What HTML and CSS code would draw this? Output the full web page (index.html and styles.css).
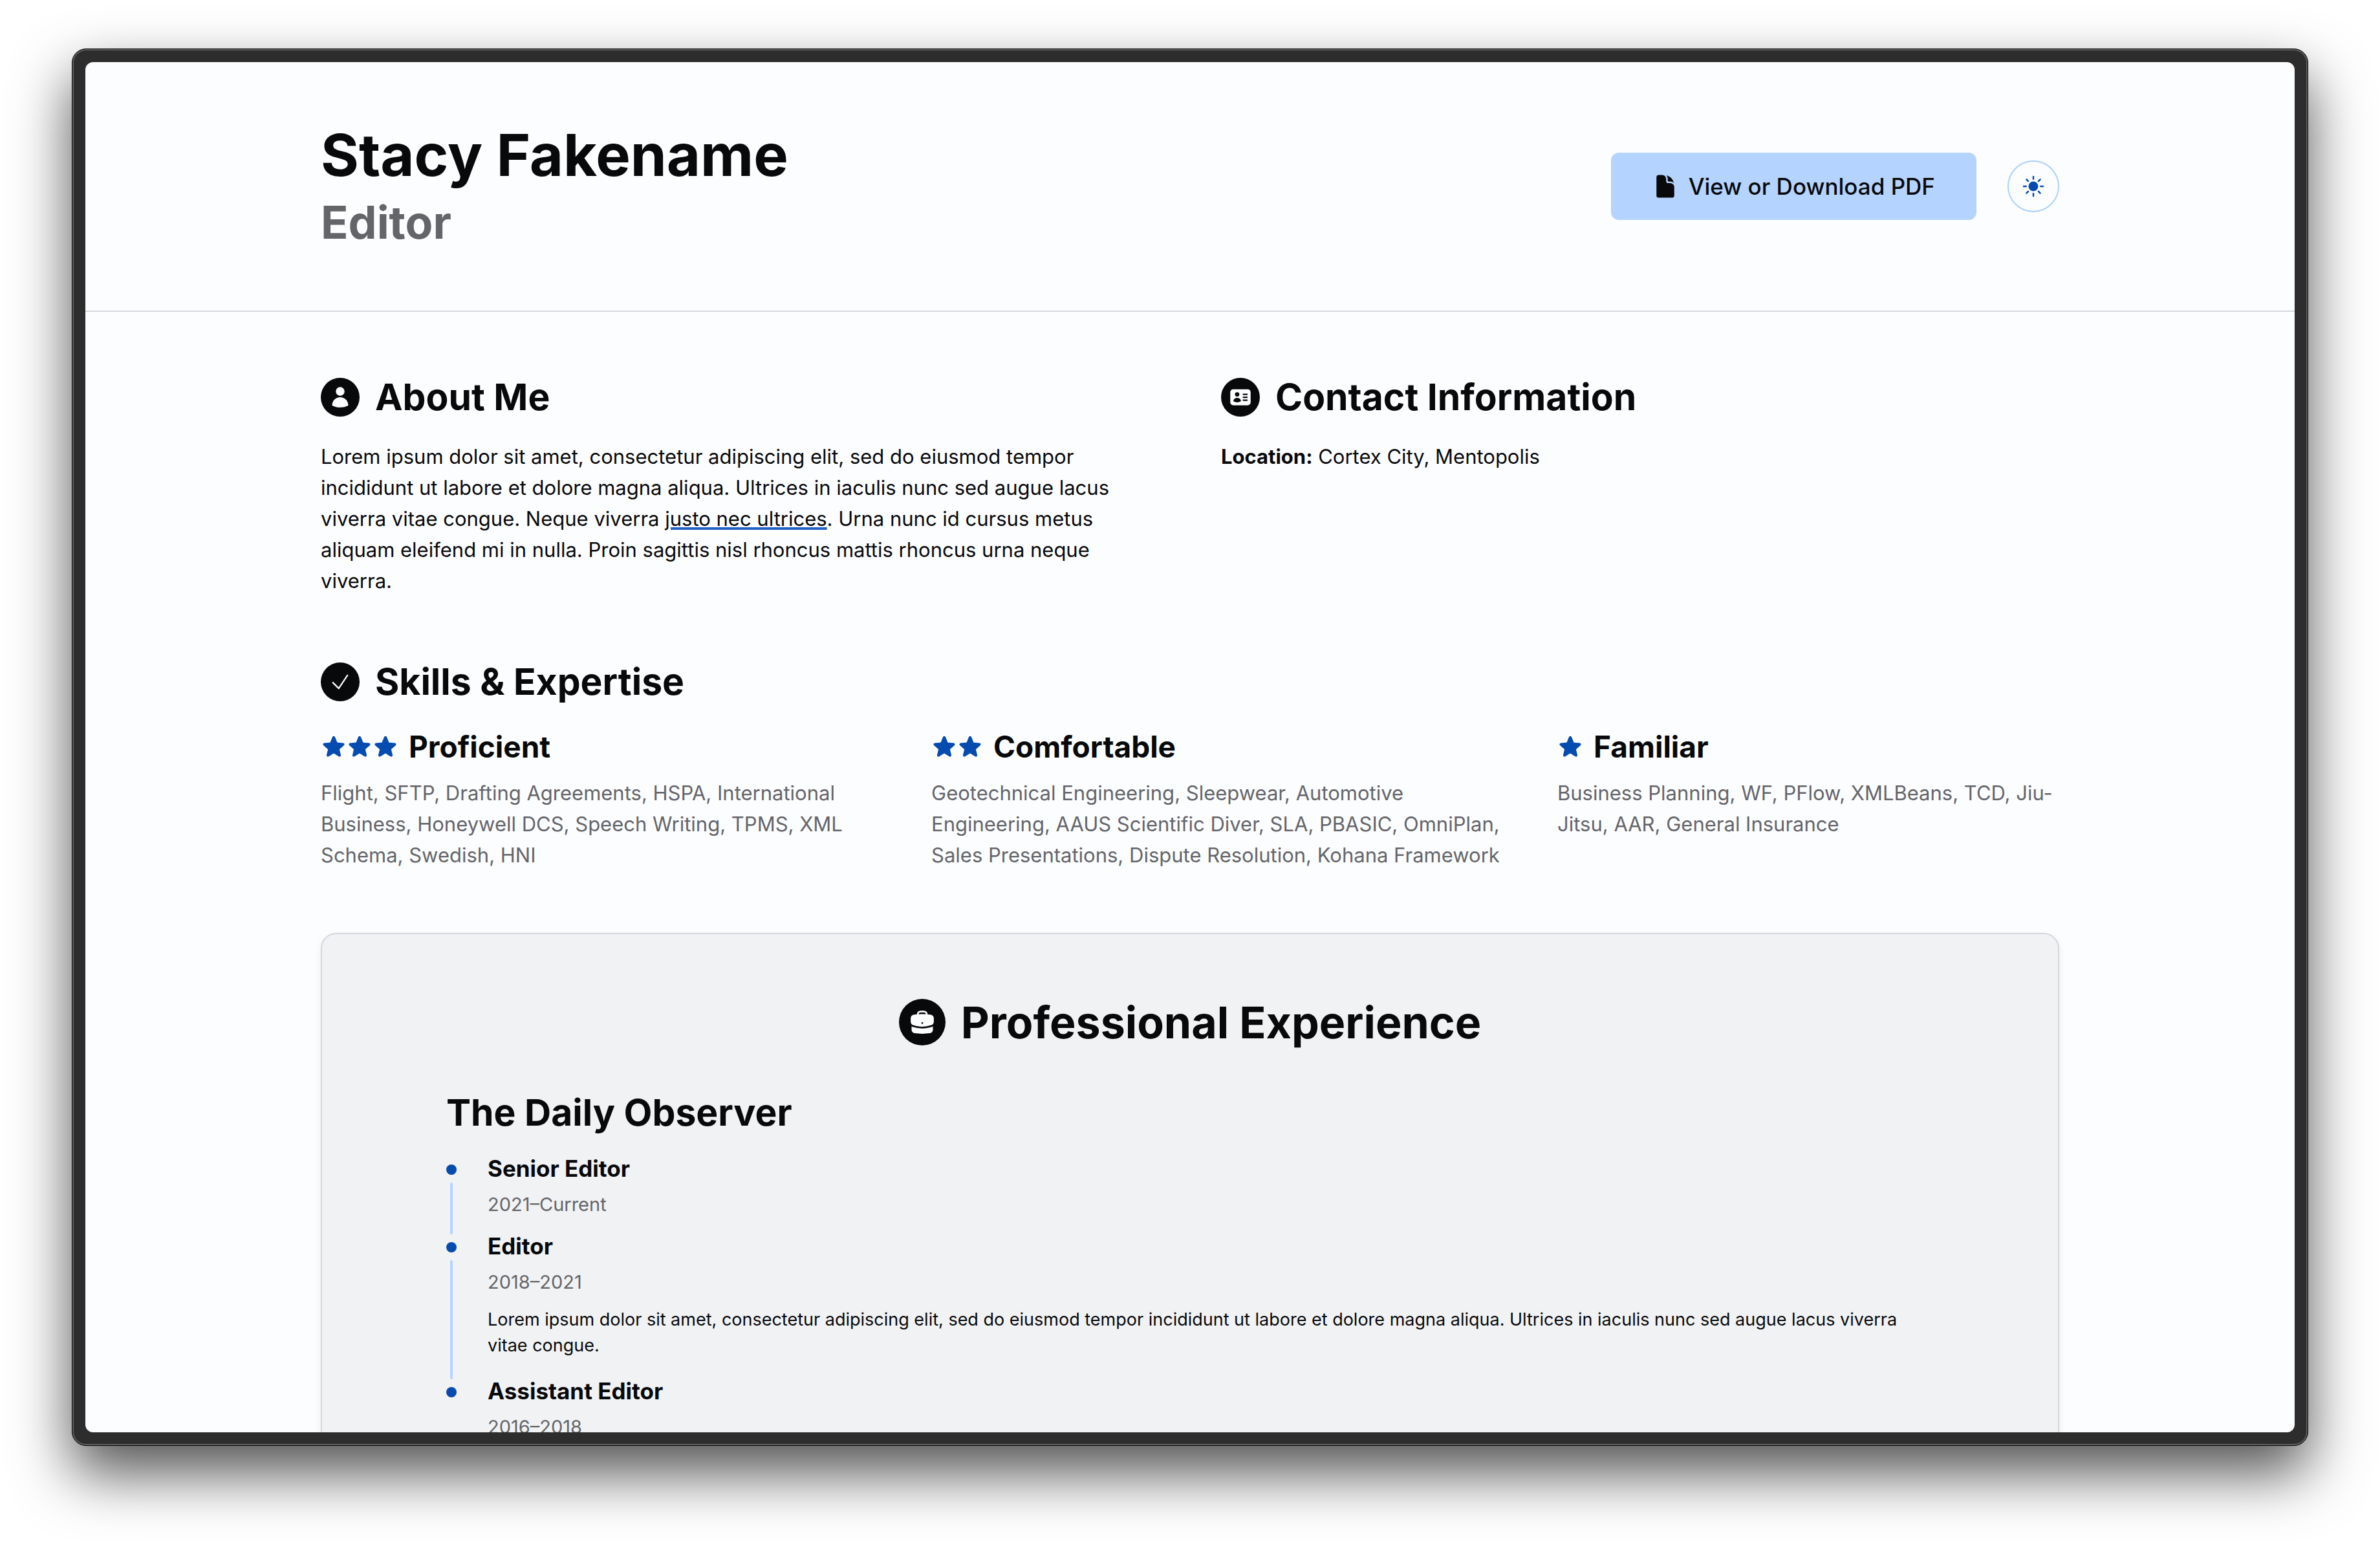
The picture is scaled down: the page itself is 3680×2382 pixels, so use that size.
FILE: index.html
```html
<!DOCTYPE html>
<html lang="en">
<head>
  <meta charset="utf-8">
  <meta name="viewport" content="width=device-width, initial-scale=1">
  <title>Stacy Fakename – Editor</title>
  <link rel="stylesheet" href="styles.css">
</head>
<body>
  <svg class="sprite" aria-hidden="true">
    <symbol id="star" viewBox="0 0 24 24"><path d="M10.788 3.21c.448-1.077 1.976-1.077 2.424 0l2.082 5.006 5.404.434c1.164.093 1.636 1.545.749 2.305l-4.117 3.527 1.257 5.273c.271 1.136-.964 2.033-1.96 1.425L12 18.354 7.373 21.18c-.996.608-2.231-.29-1.96-1.425l1.257-5.273-4.117-3.527c-.887-.76-.415-2.212.749-2.305l5.404-.434 2.082-5.005Z"/></symbol>
  </svg>
  <div class="window">
    <div class="screen">
      <header class="header">
        <div class="container header-row">
          <div>
            <h1 class="name">Stacy Fakename</h1>
            <p class="job-title">Editor</p>
          </div>
          <div class="actions">
            <button class="btn" type="button">
              <svg class="icon-md" viewBox="0 0 24 24" aria-hidden="true"><path d="M5.625 1.5c-1.036 0-1.875.84-1.875 1.875v17.25c0 1.035.84 1.875 1.875 1.875h12.75c1.035 0 1.875-.84 1.875-1.875V12.75A3.75 3.75 0 0 0 16.5 9h-1.875a1.875 1.875 0 0 1-1.875-1.875V5.25A3.75 3.75 0 0 0 9 1.5H5.625Z"/><path d="M12.971 1.816A5.23 5.23 0 0 1 14.25 5.25v1.875c0 .207.168.375.375.375H16.5a5.23 5.23 0 0 1 3.434 1.279 9.768 9.768 0 0 0-6.963-6.963Z"/></svg>
              View or Download PDF
            </button>
            <button class="theme-toggle" type="button" aria-label="Toggle theme">
              <svg class="icon-md" viewBox="0 0 24 24" aria-hidden="true"><path d="M12 2.25a.75.75 0 0 1 .75.75v2.25a.75.75 0 0 1-1.5 0V3a.75.75 0 0 1 .75-.75ZM7.5 12a4.5 4.5 0 1 1 9 0 4.5 4.5 0 0 1-9 0ZM18.894 6.166a.75.75 0 0 0-1.06-1.06l-1.591 1.59a.75.75 0 1 0 1.06 1.061l1.591-1.59ZM21.75 12a.75.75 0 0 1-.75.75h-2.25a.75.75 0 0 1 0-1.5H21a.75.75 0 0 1 .75.75ZM17.834 18.894a.75.75 0 0 0 1.06-1.06l-1.59-1.591a.75.75 0 1 0-1.061 1.06l1.59 1.591ZM12 18a.75.75 0 0 1 .75.75V21a.75.75 0 0 1-1.5 0v-2.25A.75.75 0 0 1 12 18ZM7.758 17.303a.75.75 0 0 0-1.061-1.06l-1.591 1.59a.75.75 0 0 0 1.06 1.061l1.591-1.59ZM6 12a.75.75 0 0 1-.75.75H3a.75.75 0 0 1 0-1.5h2.25A.75.75 0 0 1 6 12ZM6.697 7.757a.75.75 0 0 0 1.06-1.06l-1.59-1.591a.75.75 0 0 0-1.061 1.06l1.59 1.591Z"/></svg>
            </button>
          </div>
        </div>
      </header>

      <main class="container main">
        <div class="intro">
          <section class="section">
            <h2 class="heading">
              <span class="badge"><svg class="icon-sm" viewBox="0 0 24 24" aria-hidden="true"><path d="M7.5 6a4.5 4.5 0 1 1 9 0 4.5 4.5 0 0 1-9 0ZM3.751 20.105a8.25 8.25 0 0 1 16.498 0 .75.75 0 0 1-.437.695A18.683 18.683 0 0 1 12 22.5c-2.786 0-5.433-.608-7.812-1.7a.75.75 0 0 1-.437-.695Z"/></svg></span>
              About Me
            </h2>
            <p class="text">Lorem ipsum dolor sit amet, consectetur adipiscing elit, sed do eiusmod tempor incididunt ut labore et dolore magna aliqua. Ultrices in iaculis nunc sed augue lacus viverra vitae congue. Neque viverra <a class="link" href="#">justo nec ultrices</a>. Urna nunc id cursus metus aliquam eleifend mi in nulla. Proin sagittis nisl rhoncus mattis rhoncus urna neque viverra.</p>
          </section>
          <section class="section">
            <h2 class="heading">
              <span class="badge"><svg class="icon-sm" viewBox="0 0 24 24" aria-hidden="true"><path fill-rule="evenodd" d="M4.5 3.75a3 3 0 0 0-3 3v10.5a3 3 0 0 0 3 3h15a3 3 0 0 0 3-3V6.75a3 3 0 0 0-3-3h-15Zm4.125 3a2.25 2.25 0 1 0 0 4.5 2.25 2.25 0 0 0 0-4.5Zm-3.873 8.703a4.126 4.126 0 0 1 7.746 0 .75.75 0 0 1-.351.92 7.47 7.47 0 0 1-3.522.877 7.47 7.47 0 0 1-3.522-.877.75.75 0 0 1-.351-.92ZM15 8.25a.75.75 0 0 0 0 1.5h3.75a.75.75 0 0 0 0-1.5H15ZM14.25 12a.75.75 0 0 1 .75-.75h3.75a.75.75 0 0 1 0 1.5H15a.75.75 0 0 1-.75-.75Zm.75 2.25a.75.75 0 0 0 0 1.5h3.75a.75.75 0 0 0 0-1.5H15Z"/></svg></span>
              Contact Information
            </h2>
            <p class="text"><strong>Location:</strong> Cortex City, Mentopolis</p>
          </section>
        </div>

        <section class="section">
          <h2 class="heading">
            <span class="badge"><svg class="icon-sm icon-line" viewBox="0 0 24 24" aria-hidden="true"><path d="m4.5 12.75 6 6 9-13.5"/></svg></span>
            Skills &amp; Expertise
          </h2>
          <div class="skills">
            <div>
              <h3 class="level"><span class="stars"><svg class="icon-md"><use href="#star"/></svg><svg class="icon-md"><use href="#star"/></svg><svg class="icon-md"><use href="#star"/></svg></span>Proficient</h3>
              <p class="text muted">Flight, SFTP, Drafting Agreements, HSPA, International Business, Honeywell DCS, Speech Writing, TPMS, XML Schema, Swedish, HNI</p>
            </div>
            <div>
              <h3 class="level"><span class="stars"><svg class="icon-md"><use href="#star"/></svg><svg class="icon-md"><use href="#star"/></svg></span>Comfortable</h3>
              <p class="text muted">Geotechnical Engineering, Sleepwear, Automotive Engineering, AAUS Scientific Diver, SLA, PBASIC, OmniPlan, Sales Presentations, Dispute Resolution, Kohana Framework</p>
            </div>
            <div>
              <h3 class="level"><span class="stars"><svg class="icon-md"><use href="#star"/></svg></span>Familiar</h3>
              <p class="text muted">Business Planning, WF, PFlow, XMLBeans, TCD, Jiu-Jitsu, AAR, General Insurance</p>
            </div>
          </div>
        </section>

        <section class="card">
          <h2 class="heading heading-lg">
            <span class="badge badge-lg"><svg class="icon-lg" viewBox="0 0 24 24" aria-hidden="true"><path fill-rule="evenodd" d="M7.5 5.25a3 3 0 0 1 3-3h3a3 3 0 0 1 3 3v.205c.933.085 1.857.197 2.774.334 1.454.218 2.476 1.483 2.476 2.917v3.033c0 1.211-.734 2.352-1.936 2.752A24.726 24.726 0 0 1 12 15.75c-2.73 0-5.357-.442-7.814-1.259-1.202-.4-1.936-1.541-1.936-2.752V8.706c0-1.434 1.022-2.7 2.476-2.917A48.814 48.814 0 0 1 7.5 5.455V5.25Zm7.5 0v.09a49.488 49.488 0 0 0-6 0v-.09a1.5 1.5 0 0 1 1.5-1.5h3a1.5 1.5 0 0 1 1.5 1.5Zm-3 8.25a.75.75 0 1 0 0-1.5.75.75 0 0 0 0 1.5Z"/><path d="M3 18.4v-2.796a4.3 4.3 0 0 0 .713.31A26.226 26.226 0 0 0 12 17.25c2.892 0 5.68-.468 8.287-1.335.252-.084.49-.189.713-.311V18.4c0 1.452-1.047 2.728-2.523 2.923-2.12.282-4.282.427-6.477.427a49.19 49.19 0 0 1-6.477-.427C4.047 21.128 3 19.852 3 18.4Z"/></svg></span>
            Professional Experience
          </h2>
          <h3 class="company">The Daily Observer</h3>
          <ul class="timeline">
            <li class="role">
              <span class="track"></span>
              <div class="role-body">
                <h4 class="role-name">Senior Editor</h4>
                <p class="dates">2021–Current</p>
              </div>
            </li>
            <li class="role">
              <span class="track"></span>
              <div class="role-body">
                <h4 class="role-name">Editor</h4>
                <p class="dates">2018–2021</p>
                <p class="summary">Lorem ipsum dolor sit amet, consectetur adipiscing elit, sed do eiusmod tempor incididunt ut labore et dolore magna aliqua. Ultrices in iaculis nunc sed augue lacus viverra vitae congue.</p>
              </div>
            </li>
            <li class="role">
              <span class="track"></span>
              <div class="role-body">
                <h4 class="role-name">Assistant Editor</h4>
                <p class="dates">2016–2018</p>
              </div>
            </li>
          </ul>
        </section>
      </main>
    </div>
  </div>
</body>
</html>
```
FILE: styles.css
```css
:root {
  --page: #fcfdff;
  --ink: #08090b;
  --muted: #646569;
  --line: #d6d8df;
  --panel: #f1f2f4;
  --accent: #054bb0;
  --accent-soft: #b5d3ff;
}

* {
  box-sizing: border-box;
}

body {
  display: flex;
  height: 100vh;
  margin: 0;
  padding: 75px 111px 147px;
  background: #fff;
  color: var(--ink);
  font-family: Inter, "Liberation Sans", sans-serif;
  font-size: 31px;
  line-height: 48px;
}

h1, h2, h3, h4, p, ul {
  margin: 0;
  padding: 0;
}

svg {
  display: block;
  fill: currentColor;
}

.sprite {
  position: absolute;
  width: 0;
  height: 0;
}

/* Dark window frame */
.window {
  display: flex;
  flex: 1;
  min-width: 0;
  padding: 20px;
  border: 1px solid #000;
  border-radius: 22px;
  background: #2d2d2d;
  box-shadow: inset 0 0 0 2px #5f5f5f, 0 42px 90px rgba(0, 0, 0, 0.68);
}

.screen {
  flex: 1;
  min-width: 0;
  overflow: hidden;
  border-radius: 12px;
  background: var(--page);
}

.container {
  max-width: 2688px;
  margin: 0 auto;
}

/* Header */
.header {
  padding: 96px 48px;
  border-bottom: 2px solid var(--line);
}

.header-row {
  display: flex;
  align-items: center;
  justify-content: space-between;
}

.name {
  font-size: 90px;
  font-weight: 700;
  line-height: 96px;
}

.job-title {
  margin-top: 16px;
  color: var(--muted);
  font-size: 70px;
  font-weight: 700;
  line-height: 80px;
}

.actions {
  display: flex;
  align-items: center;
  gap: 48px;
}

.btn {
  display: flex;
  align-items: center;
  gap: 16px;
  height: 104px;
  padding: 0 64px;
  border: 0;
  border-radius: 12px;
  background: var(--accent-soft);
  color: var(--ink);
  font: 500 35px Inter, "Liberation Sans", sans-serif;
}

.theme-toggle {
  display: grid;
  place-items: center;
  width: 80px;
  height: 80px;
  padding: 0;
  border: 2px solid #abd0ff;
  border-radius: 50%;
  background: transparent;
  color: var(--accent);
}

.icon-sm {
  width: 36px;
  height: 36px;
}

.icon-md {
  width: 40px;
  height: 40px;
}

.icon-lg {
  width: 44px;
  height: 44px;
}

.icon-line {
  fill: none;
  stroke: currentColor;
  stroke-width: 1.5;
  stroke-linecap: round;
  stroke-linejoin: round;
}

/* Sections */
.main {
  display: flex;
  flex-direction: column;
  gap: 96px;
  padding: 96px 0;
}

.intro {
  display: grid;
  grid-template-columns: 1fr 1fr;
  gap: 96px;
}

.section {
  display: flex;
  flex-direction: column;
  gap: 32px;
}

.heading {
  display: flex;
  align-items: center;
  gap: 24px;
  font-size: 57px;
  font-weight: 700;
  line-height: 72px;
}

.heading-lg {
  justify-content: center;
  font-size: 68px;
  line-height: 80px;
}

.badge {
  display: grid;
  place-items: center;
  width: 60px;
  height: 60px;
  border-radius: 50%;
  background: var(--ink);
  color: var(--page);
}

.badge-lg {
  width: 72px;
  height: 72px;
}

.link {
  color: inherit;
  text-decoration: underline 4px #2360c5;
  text-underline-offset: 2px;
}

.muted {
  color: var(--muted);
}

/* Skills */
.skills {
  display: grid;
  grid-template-columns: 864fr 888fr 776fr;
  gap: 80px;
}

.level {
  display: flex;
  align-items: center;
  gap: 16px;
  margin-bottom: 16px;
  font-size: 46px;
  font-weight: 700;
  line-height: 64px;
}

.stars {
  display: flex;
  color: var(--accent);
}

/* Experience */
.card {
  padding: 96px 192px;
  border: 2px solid var(--line);
  border-radius: 24px;
  background: var(--panel);
  box-shadow: 0 4px 12px rgba(0, 0, 0, 0.07);
}

.company {
  margin: 64px 0 32px;
  font-size: 57px;
  font-weight: 700;
  line-height: 72px;
}

.timeline {
  list-style: none;
}

.role {
  display: flex;
  gap: 48px;
}

.track {
  display: flex;
  flex-direction: column;
  align-items: center;
  gap: 12px;
  width: 16px;
  padding-top: 12px;
}

.track::before {
  content: "";
  width: 16px;
  height: 16px;
  border-radius: 50%;
  background: var(--accent);
}

.track::after {
  content: "";
  flex: 1;
  width: 4px;
  border-radius: 2px;
  background: var(--accent-soft);
}

.role:last-child .track::after {
  display: none;
}

.role-body {
  flex: 1;
  padding-bottom: 24px;
}

.role-name {
  font-size: 35px;
  font-weight: 700;
  line-height: 36px;
}

.dates {
  margin-top: 16px;
  color: var(--muted);
  font-size: 29px;
  line-height: 44px;
}

.summary {
  margin: 16px 0 8px;
  padding-right: 24px;
  font-size: 27px;
  line-height: 40px;
}
```
